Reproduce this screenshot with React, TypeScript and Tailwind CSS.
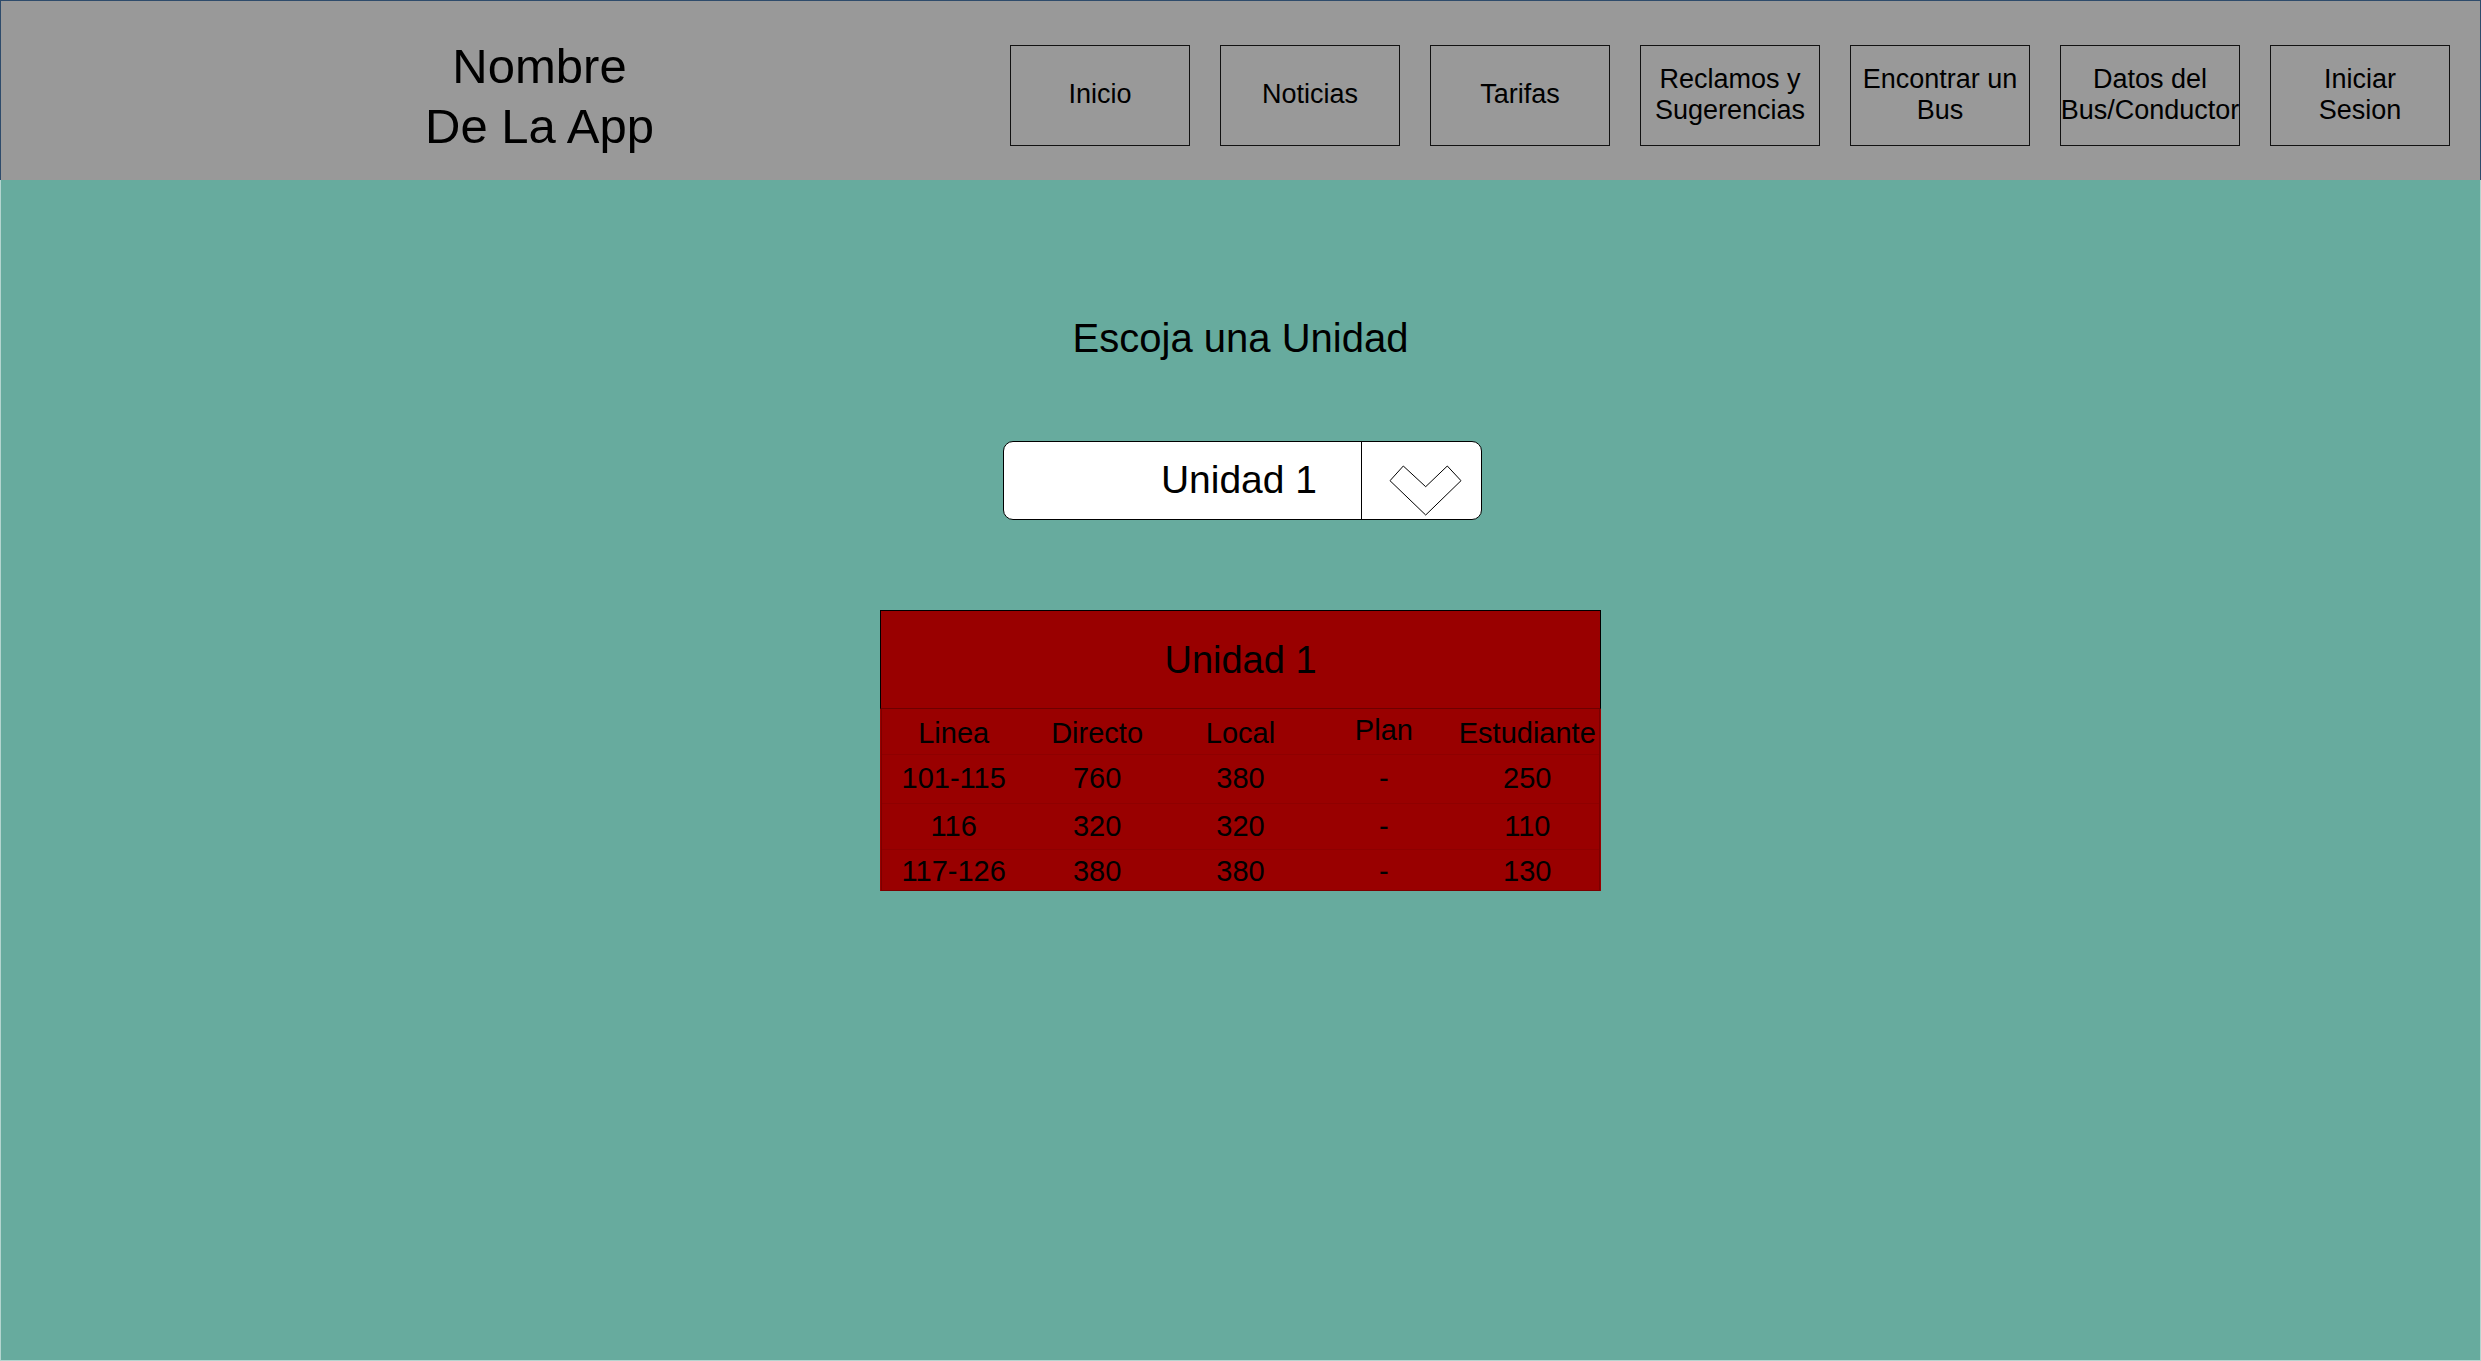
const navItems = [
  ["Inicio"],
  ["Noticias"],
  ["Tarifas"],
  ["Reclamos y", "Sugerencias"],
  ["Encontrar un", "Bus"],
  ["Datos del", "Bus/Conductor"],
  ["Iniciar", "Sesion"],
];

const rows = [
  { linea: "101-115", directo: "760", local: "380", plan: "-", estudiante: "250", h: "h-[49px]" },
  { linea: "116", directo: "320", local: "320", plan: "-", estudiante: "110", h: "h-[46px]" },
  { linea: "117-126", directo: "380", local: "380", plan: "-", estudiante: "130", h: "h-[41px]" },
];

export default function App() {
  return (
    <div className="flex h-[1361px] w-full flex-col bg-[#67ab9e] font-['Liberation_Sans',Arial,sans-serif] text-black">
      <Header />
      <main className="flex flex-1 flex-col items-center border-x border-b border-[#b3d5cf] pt-[138px]">
        <h2 className="text-[40px] leading-[40px]">Escoja una Unidad</h2>
        <UnitSelect />
        <FareTable />
      </main>
    </div>
  );
}

function Header() {
  return (
    <header className="flex h-[180px] shrink-0 items-start border-x border-t border-[#2e4b6b] bg-[#999999]">
      <div className="mt-[35px] w-[1009px] pl-[68px] text-center text-[49px] leading-[60px]">
        Nombre
        <br />
        De La App
      </div>
      <nav className="mt-[44px] flex gap-[30px]">
        {navItems.map((lines) => (
          <button
            key={lines.join(" ")}
            className="flex h-[101px] w-[180px] flex-col items-center justify-center border border-[#111] pb-[2px] text-[27px] leading-[31px] whitespace-nowrap"
          >
            {lines.map((l) => (
              <span key={l}>{l}</span>
            ))}
          </button>
        ))}
      </nav>
    </header>
  );
}

function UnitSelect() {
  return (
    <div className="mt-[83px] ml-[4px] flex h-[79px] w-[479px] overflow-hidden rounded-[10px] border border-black bg-white">
      <div className="flex flex-1 items-center justify-end pr-[44px] text-[39px]">Unidad 1</div>
      <div className="w-[120px] border-l border-black">
        <svg viewBox="0 0 119 77" className="h-full w-full">
          <polygon
            points="28,38.7 41.3,24 63.7,44.7 85.3,24 99,38.7 63.7,73"
            fill="white"
            stroke="black"
            strokeWidth="1"
          />
        </svg>
      </div>
    </div>
  );
}

function FareTable() {
  const cols = ["Linea", "Directo", "Local", "Plan", "Estudiante"];
  return (
    <div className="mt-[90px] w-[721px] bg-[#990000]">
      <div className="flex h-[99px] items-center justify-center border border-b-[#6e0000] border-black pt-[2px] text-[38px]">
        Unidad 1
      </div>
      <div className="mx-[1px] border-x border-b border-[#7a0000] text-[29px]">
        <div className="grid h-[45px] grid-cols-5 items-center text-center">
          {cols.map((c) => (
            <span key={c} className={c === "Plan" ? "pb-[5px]" : ""}>
              {c}
            </span>
          ))}
        </div>
        {rows.map((r) => (
          <div key={r.linea} className={`grid grid-cols-5 items-center border-t border-[#8e0000] text-center ${r.h}`}>
            <span>{r.linea}</span>
            <span>{r.directo}</span>
            <span>{r.local}</span>
            <span>{r.plan}</span>
            <span>{r.estudiante}</span>
          </div>
        ))}
      </div>
    </div>
  );
}
